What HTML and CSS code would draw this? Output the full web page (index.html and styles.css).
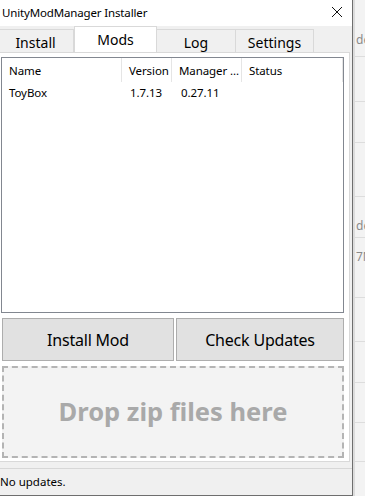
FILE: index.html
```html
<!DOCTYPE html>
<html lang="en">
  <head>
    <meta charset="UTF-8" />
    <meta name="viewport" content="width=device-width, initial-scale=1.0" />
    <title>UnityModManager Installer</title>
    <link rel="stylesheet" href="styles.css">
  </head>
  <body>
    <div class="screen">
      <div class="window">
        <div class="titlebar">
          <span class="title">UnityModManager Installer</span>
          <svg class="close-icon" width="12" height="12" viewBox="0 0 12 12">
            <path d="M1 1 L11 11 M11 1 L1 11" stroke="#111" stroke-width="1" fill="none" />
          </svg>
        </div>

        <div class="tabs">
          <div class="tab tab-install">Install</div>
          <div class="tab tab-mods active">Mods</div>
          <div class="tab tab-log">Log</div>
          <div class="tab tab-settings">Settings</div>
        </div>

        <div class="tab-page">
          <div class="listview">
            <div class="lv-header">
              <div class="lv-col col-name">Name</div>
              <div class="lv-col col-version">Version</div>
              <div class="lv-col col-manager">Manager ...</div>
              <div class="lv-col col-status">Status</div>
            </div>
            <div class="lv-row">
              <div class="lv-cell col-name">ToyBox</div>
              <div class="lv-cell col-version">1.7.13</div>
              <div class="lv-cell col-manager">0.27.11</div>
              <div class="lv-cell col-status"></div>
            </div>
          </div>

          <div class="buttons">
            <button class="btn btn-install">Install Mod</button>
            <button class="btn btn-check">Check Updates</button>
          </div>

          <div class="dropzone">Drop zip files here</div>
        </div>

        <div class="statusbar">No updates.</div>
      </div>

      <div class="backdrop">
        <div class="bd-row bd-1"><span class="bd-text">dex</span></div>
        <div class="bd-row bd-2"></div>
        <div class="bd-row bd-3"></div>
        <div class="bd-row bd-4"></div>
        <div class="bd-row bd-5"><span class="bd-text">de</span></div>
        <div class="bd-row bd-6"><span class="bd-text">7N</span></div>
        <div class="bd-row bd-7"></div>
        <div class="bd-row bd-8"></div>
        <div class="bd-row bd-9"></div>
        <div class="bd-row bd-10"></div>
        <div class="bd-row bd-11"></div>
      </div>
    </div>
  </body>
</html>
```

FILE: styles.css
```css
* {
  margin: 0;
  padding: 0;
  box-sizing: border-box;
}

body,
html {
  width: 100%;
  height: 100%;
  overflow: hidden;
  font-family: "Noto Sans", "Open Sans", sans-serif;
  color: #000;
}

.screen {
  display: flex;
  width: 365px;
  height: 496px;
}

/* Window */

.window {
  width: 353px;
  height: 496px;
  flex-shrink: 0;
  display: flex;
  flex-direction: column;
  background-color: #f0f0f0;
  border-right: 1px solid #6e6e6e;
  border-bottom: 1px solid #6e6e6e;
}

.titlebar {
  height: 26px;
  background-color: #fff;
  display: flex;
  align-items: center;
  justify-content: space-between;
  padding: 0 9px 2px 2px;
}

.title {
  font-size: 11.5px;
  letter-spacing: -0.15px;
}

.close-icon {
  display: block;
}

/* Tabs */

.tabs {
  height: 26px;
  display: flex;
  align-items: flex-end;
}

.tab {
  height: 23px;
  border: 1px solid #d9d9d9;
  border-bottom: none;
  background-color: #f0f0f0;
  font-size: 14px;
  display: flex;
  justify-content: center;
  align-items: center;
  padding-top: 2px;
}

.tab-install {
  width: 74px;
  border-left: none;
  padding-right: 2px;
}

.tab-mods {
  width: 83px;
}

.tab-log {
  width: 79px;
  border-left: none;
}

.tab-settings {
  width: 78px;
  border-left: none;
}

.tab.active {
  height: 26px;
  background-color: #fff;
  padding-top: 0;
  padding-bottom: 1px;
}

.tab-page {
  width: 350px;
  height: 410px;
  background-color: #fff;
  border: 1px solid #d9d9d9;
  border-left: none;
  padding: 4px 5px 3px 1px;
  display: flex;
  flex-direction: column;
  gap: 5px;
}

/* Mod list */

.listview {
  width: 343px;
  height: 256px;
  border: 1px solid #828790;
  font-size: 11.5px;
  letter-spacing: -0.1px;
}

.lv-header {
  height: 24px;
  display: flex;
}

.lv-col {
  height: 100%;
  display: flex;
  align-items: center;
  padding-left: 7px;
  border-right: 1px solid #e5e5e5;
  overflow: hidden;
  white-space: nowrap;
}

.lv-row {
  height: 21px;
  display: flex;
  align-items: center;
}

.lv-cell {
  padding-left: 7px;
  white-space: nowrap;
}

.col-name {
  width: 120px;
}

.lv-cell.col-name {
  width: 121px;
}

.col-version {
  width: 50px;
}

.lv-cell.col-version {
  width: 51px;
}

.col-manager {
  width: 70px;
}

.lv-col.col-status {
  flex: 1;
}

/* Buttons */

.buttons {
  display: flex;
  gap: 2px;
  padding-left: 1px;
}

.btn {
  height: 43px;
  background-color: #e1e1e1;
  border: 1px solid #adadad;
  font-family: "Noto Sans", "Open Sans", sans-serif;
  font-size: 16px;
  letter-spacing: -0.2px;
  color: #000;
}

.btn-install {
  width: 172px;
}

.btn-check {
  width: 168px;
}

/* Drop area */

.dropzone {
  height: 92px;
  width: 342px;
  margin-left: 1px;
  border: 2px dashed #b4b4b4;
  background-color: #f3f3f3;
  display: flex;
  align-items: center;
  justify-content: center;
  font-size: 25.5px;
  font-weight: bold;
  color: #a9a9a9;
  padding-bottom: 2px;
}

/* Status strip */

.statusbar {
  margin-top: 6px;
  flex: 1;
  border-top: 1px solid #d7d7d7;
  font-size: 11.5px;
  display: flex;
  align-items: center;
  padding-bottom: 1px;
}

/* App behind the window */

.backdrop {
  flex: 1;
  display: flex;
  flex-direction: column;
  background-color: #f3f3f3;
  overflow: hidden;
  font-size: 12px;
  color: #8a8a8a;
  border-left: 2px solid #dcdcdc;
}

.bd-row {
  border-bottom: 1px solid #dddddd;
  display: flex;
  padding-left: 1px;
}

.bd-text {
  white-space: nowrap;
}

.bd-1 { height: 57px; align-items: flex-end; padding-bottom: 8px; }
.bd-2 { height: 45px; }
.bd-3 { height: 41px; }
.bd-4 { height: 54px; }
.bd-5 { height: 41px; align-items: flex-end; padding-bottom: 3px; }
.bd-6 { height: 60px; align-items: flex-start; padding-top: 10px; }
.bd-7 { height: 44px; }
.bd-8 { height: 41px; }
.bd-9 { height: 40px; }
.bd-10 { height: 39px; }
.bd-11 { flex: 1; border-bottom: none; }
```
